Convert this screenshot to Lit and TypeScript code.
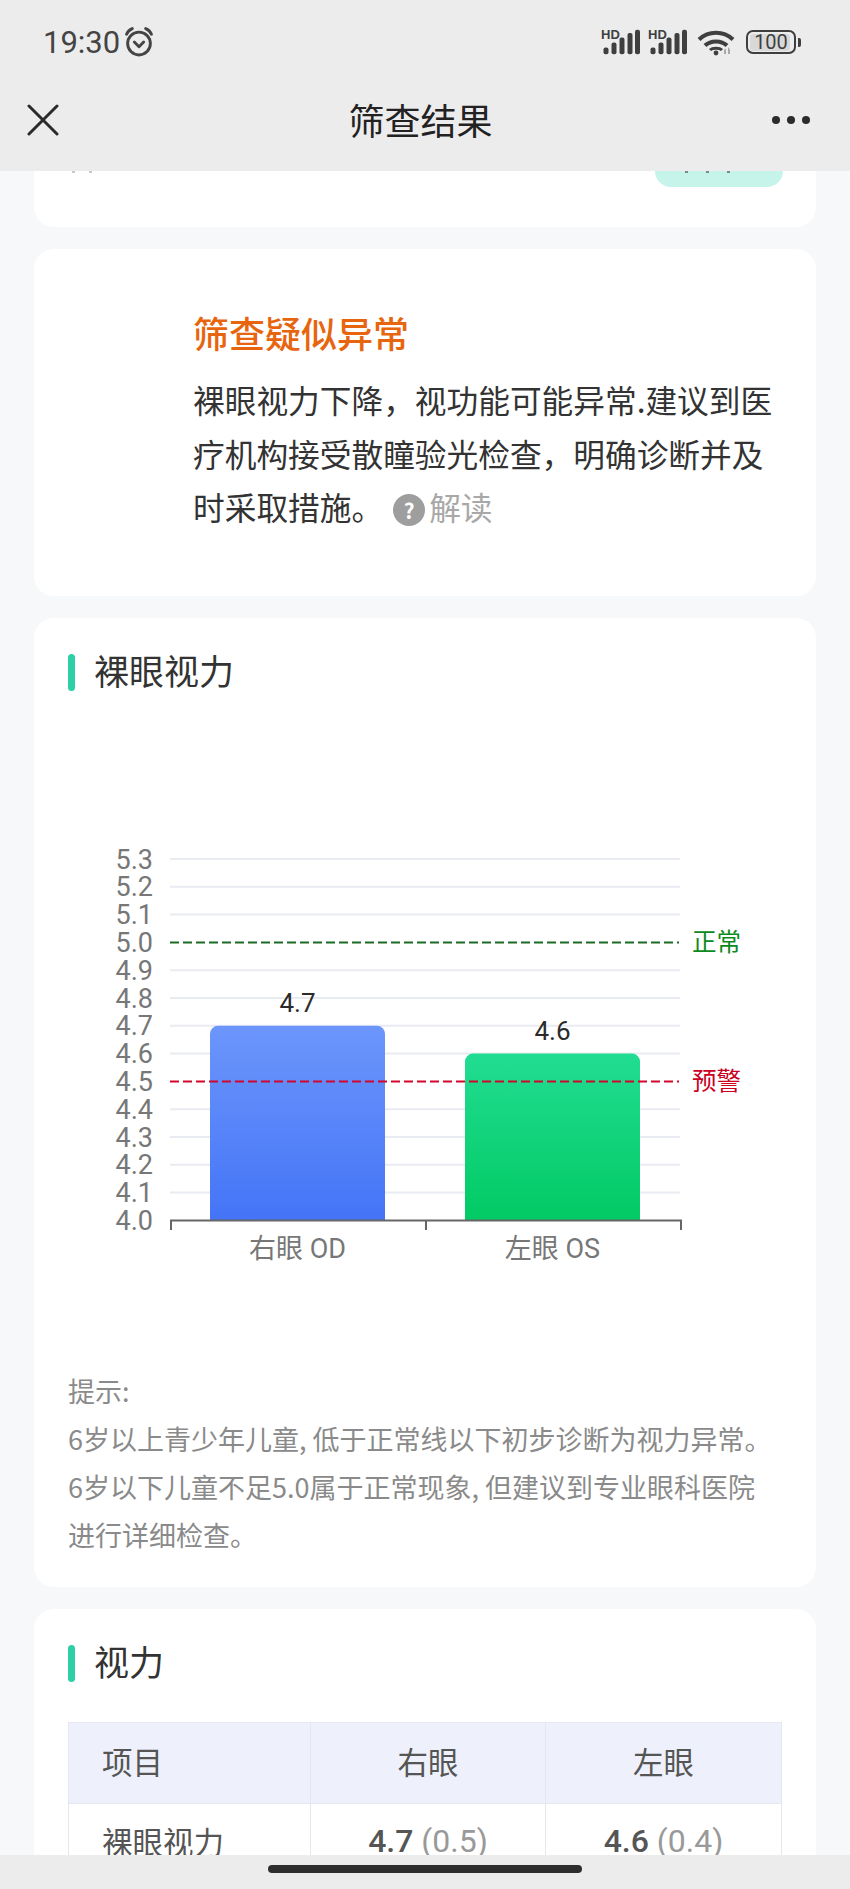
import { LitElement, css, html, svg } from 'lit'
import { customElement } from 'lit/decorators.js'

// chart geometry, in svg units (svg sits at page x=68, y=800)
const TICKS = ['5.3', '5.2', '5.1', '5.0', '4.9', '4.8', '4.7', '4.6', '4.5', '4.4', '4.3', '4.2', '4.1', '4.0']
const TOP = 59
const STEP = 27.8
const valueY = (v: number) => TOP + (5.3 - v) * 10 * STEP

const BARS = [
	{ value: 4.7, x: 142, label: '右眼 OD', fill: 'url(#blue)' },
	{ value: 4.6, x: 397, label: '左眼 OS', fill: 'url(#green)' },
]

@customElement('app-root')
export class AppRoot extends LitElement {
	renderChart() {
		const base = valueY(4.0)
		return html`
			<svg class="chart" width="748" height="480" viewBox="0 0 748 480">
				<defs>
					<linearGradient id="blue" x1="0" y1="0" x2="0" y2="1">
						<stop offset="0" stop-color="#6c96fb"></stop>
						<stop offset="1" stop-color="#4474f7"></stop>
					</linearGradient>
					<linearGradient id="green" x1="0" y1="0" x2="0" y2="1">
						<stop offset="0" stop-color="#21dd92"></stop>
						<stop offset="1" stop-color="#02ca64"></stop>
					</linearGradient>
				</defs>
				${TICKS.map((t, i) => {
					const y = TOP + i * STEP
					return svg`
						${t !== '5.0' && t !== '4.5' && t !== '4.0'
							? svg`<line x1="102" x2="612" y1=${y} y2=${y} stroke="#e9ebf3" stroke-width="2"></line>`
							: ''}
						<text class="tick" x="85" y=${y + 9.5} text-anchor="end">${t}</text>
					`
				})}
				${BARS.map(b => {
					const top = valueY(b.value)
					return svg`
						<path d="M${b.x} ${base}V${top + 8}a8 8 0 0 1 8-8h159a8 8 0 0 1 8 8V${base}Z" fill=${b.fill}></path>
						<text class="val" x=${b.x + 87.5} y=${top - 14} text-anchor="middle">${b.value.toFixed(1)}</text>
						<text class="tick cat" x=${b.x + 87.5} y=${base + 38} text-anchor="middle">${b.label}</text>
					`
				})}
				<line x1="102" x2="611" y1=${valueY(5.0)} y2=${valueY(5.0)} stroke="#1b6b25" stroke-width="2" stroke-dasharray="9 4"></line>
				<line x1="102" x2="611" y1=${valueY(4.5)} y2=${valueY(4.5)} stroke="#d2062a" stroke-width="2" stroke-dasharray="9 4"></line>
				<text class="mark" x="624" y=${valueY(5.0) + 9} fill="#0c8a1c">正常</text>
				<text class="mark" x="624" y=${valueY(4.5) + 9} fill="#c9001f">预警</text>
				<path d="M103 430V${base}H613V430M358 ${base}V430" fill="none" stroke="#666" stroke-width="2"></path>
			</svg>
		`
	}

	render() {
		return html`
			<div class="top">
				<div class="status">
					<span class="time">19:30</span>
					<svg class="alarm" width="28" height="30" viewBox="1.500 0.500 27 29" fill="none" stroke="#444" stroke-width="2.800" stroke-linecap="round" stroke-linejoin="round">
						<circle cx="15" cy="16.500" r="11"></circle>
						<path d="M10.500 15l4.500 4.500 4.500-4.500"></path>
						<path d="M3 7.500C4 5 6 3 8.500 2M27 7.500C26 5 24 3 21.500 2"></path>
					</svg>
					<div class="status-right">
						${[0, 1].map(() => html`
							<svg class="signal" width="40" height="26" viewBox="0 0 40 26">
								<text class="hd" x="0" y="10">HD</text>
								<g fill="#3f3f3f">
									<rect x="2.500" y="18.500" width="5" height="6.700" rx="2"></rect>
									<rect x="10.500" y="13.500" width="5" height="11.700" rx="2"></rect>
									<rect x="18.500" y="8.500" width="5" height="16.700" rx="2"></rect>
									<rect x="26.500" y="4" width="5" height="21.200" rx="2"></rect>
									<rect x="34" y="0.800" width="5" height="24.400" rx="2"></rect>
								</g>
							</svg>
						`)}
						<svg class="wifi" width="38" height="27" viewBox="0 0 38 27" fill="none" stroke="#3f3f3f" stroke-width="4">
							<path d="M2 10.500C11.500 1.500 26.500 1.500 36 10.500"></path>
							<path d="M8 16.500C13.500 11 24.500 11 30 16.500"></path>
							<path d="M13 21C15.500 18.500 22.500 18.500 25 21" stroke-width="3"></path>
							<circle cx="19" cy="24" r="2.400" fill="#3f3f3f" stroke="none"></circle>
							<path d="M27 25v-4l2-1.500V25zM31 25v-7l2 2.500V25z" fill="#a8a8a8" stroke="none"></path>
						</svg>
						<div class="battery"><span class="battery-fill"></span><span class="battery-text">100</span></div>
						<span class="nub"></span>
					</div>
				</div>
				<div class="nav">
					<svg width="32" height="32" viewBox="0 0 32 32" stroke="#2b2b2b" stroke-width="3" stroke-linecap="round">
						<path d="M2 2l28 28M30 2L2 30"></path>
					</svg>
					<div class="nav-title">筛查结果</div>
					<div class="dots"><i></i><i></i><i></i></div>
				</div>
			</div>

			<div class="main">
				<div class="card stub">
					<div class="specks left"><i></i><i></i></div>
					<div class="badge"><div class="specks"><i></i><i></i><i></i></div></div>
				</div>

				<div class="card notice">
					<div class="notice-title">筛查疑似异常</div>
					<div class="notice-text">
						裸眼视力下降，视功能可能异常.建议到医疗机构接受散瞳验光检查，明确诊断并及时采取措施。<span class="hint"><span class="qmark">?</span>解读</span>
					</div>
				</div>

				<div class="card section">
					<div class="sec-title">裸眼视力</div>
					${this.renderChart()}
					<div class="tips">
						提示:<br>
						6岁以上青少年儿童, 低于正常线以下初步诊断为视力异常。<br>
						6岁以下儿童不足5.0属于正常现象, 但建议到专业眼科医院<br>
						进行详细检查。
					</div>
				</div>

				<div class="card section">
					<div class="sec-title">视力</div>
					<table>
						<colgroup><col class="c1"><col class="c2"><col class="c3"></colgroup>
						<thead>
							<tr><th class="item">项目</th><th>右眼</th><th>左眼</th></tr>
						</thead>
						<tbody>
							<tr>
								<td class="item">裸眼视力</td>
								<td class="num"><b>4.7</b> <span class="sub">(0.5)</span></td>
								<td class="num"><b>4.6</b> <span class="sub">(0.4)</span></td>
							</tr>
						</tbody>
					</table>
				</div>
			</div>

			<div class="bottom"><span class="home"></span></div>
		`
	}

	static styles = css`
		:host {
			display: flex;
			flex-direction: column;
			width: 850px;
			height: 1889px;
			overflow: hidden;
			background: #f7f8fa;
			font-family: "Noto Sans CJK SC", "Noto Sans", sans-serif;
			color: #333;
		}

		.top {
			flex: none;
			height: 171px;
			background: #ececec;
			position: relative;
			z-index: 1;
		}

		.status {
			height: 84px;
			display: flex;
			align-items: center;
			padding: 0 49px 0 43px;
		}

		.time {
			font-family: Roboto, sans-serif;
			font-size: 31px;
			color: #444;
		}

		.alarm {
			margin-left: 5px;
		}

		.status-right {
			margin-left: auto;
			display: flex;
			align-items: center;
		}

		.status-right svg + svg {
			margin-left: 7px;
		}

		.status-right .wifi {
			margin-left: 9px;
		}

		.signal {
			overflow: visible;
		}

		.hd {
			font-family: "Liberation Sans", sans-serif;
			font-size: 13px;
			font-weight: 700;
			fill: #3f3f3f;
		}

		.battery {
			position: relative;
			margin-left: 11px;
			width: 50px;
			height: 24px;
			box-sizing: border-box;
			border: 2.500px solid #3f3f3f;
			border-radius: 7px;
			display: flex;
			align-items: center;
			justify-content: center;
		}

		.battery-fill {
			position: absolute;
			inset: 1.500px 4px 1.500px 1.500px;
			background: #d8d8d8;
			border-radius: 3px;
		}

		.battery-text {
			position: relative;
			font-family: Roboto, sans-serif;
			font-size: 20px;
			line-height: 1;
			color: #3f3f3f;
		}

		.nub {
			margin-left: 2px;
			width: 3px;
			height: 9px;
			border-radius: 0 2px 2px 0;
			background: #3f3f3f;
		}

		.nav {
			height: 72px;
			display: grid;
			grid-template-columns: 1fr auto 1fr;
			align-items: center;
			padding: 0 40px 0 27px;
		}

		.nav-title {
			font-size: 36px;
			color: #222;
			line-height: 1;
			margin-left: 4px;
			padding-bottom: 2px;
		}

		.dots {
			justify-self: end;
			display: flex;
			gap: 7px;
		}

		.dots i {
			width: 8px;
			height: 8px;
			border-radius: 50%;
			background: #2b2b2b;
		}

		.main {
			flex: 1;
			min-height: 0;
			overflow: hidden;
			padding: 0 34px;
			display: flex;
			flex-direction: column;
			gap: 22px;
		}

		.card {
			flex: none;
			background: #fff;
			border-radius: 20px;
		}

		.stub {
			height: 56px;
			border-radius: 0 0 20px 20px;
			display: flex;
			justify-content: space-between;
			align-items: flex-start;
			padding: 0 33px 0 38px;
		}

		.badge {
			width: 128px;
			height: 16px;
			background: #c6f3ea;
			border-radius: 0 0 16px 16px;
			padding-left: 30px;
			box-sizing: border-box;
		}

		.specks {
			display: flex;
			gap: 18px;
		}

		.specks i {
			width: 3px;
			height: 2px;
			background: #7c8a86;
		}

		.specks.left {
			gap: 14px;
		}

		.specks.left i {
			background: #c9c9c9;
		}

		.notice {
			padding: 56px 40px 62px 159px;
		}

		.notice-title {
			font-size: 36px;
			font-weight: 500;
			line-height: 54px;
			color: #e8650f;
			margin-bottom: 14px;
		}

		.notice-text {
			font-size: 31.700px;
			line-height: 53.500px;
			color: #333;
		}

		.hint {
			color: #a8a8a8;
			margin-left: 10px;
		}

		.qmark {
			display: inline-block;
			width: 32px;
			height: 32px;
			border-radius: 50%;
			background: #9e9e9e;
			color: #fff;
			font-size: 21px;
			font-weight: 700;
			line-height: 32px;
			text-align: center;
			margin-right: 4px;
			vertical-align: 1px;
		}

		.section {
			padding: 36px 34px 0;
		}

		.sec-title {
			position: relative;
			padding-left: 26px;
			padding-bottom: 5px;
			font-size: 35px;
			line-height: 32px;
			color: #333;
		}

		.sec-title::before {
			content: '';
			position: absolute;
			left: 0;
			top: 0;
			width: 7px;
			height: 37px;
			border-radius: 4px;
			background: #2ccfa6;
		}

		.chart {
			display: block;
			margin-top: 109px;
			overflow: visible;
		}

		.chart text {
			font-family: Roboto, "Noto Sans CJK SC", sans-serif;
			font-size: 27px;
		}

		.chart .tick {
			fill: #777;
		}

		.chart .val {
			fill: #2b2b2b;
			font-size: 26px;
		}

		.chart .mark {
			font-family: "Noto Sans CJK SC", sans-serif;
			font-size: 24.500px;
		}

		.tips {
			margin-top: 87px;
			padding-bottom: 28px;
			font-size: 27px;
			line-height: 48px;
			color: #8a8a8a;
			white-space: nowrap;
		}

		table {
			margin-top: 40px;
			width: 713px;
			table-layout: fixed;
			border-collapse: collapse;
			font-size: 30.500px;
			color: #555;
		}

		.c1 {
			width: 242px;
		}

		.c2 {
			width: 235px;
		}

		.c3 {
			width: 236px;
		}

		th,
		td {
			box-sizing: border-box;
			border: 1.500px solid #e4e7f0;
			text-align: center;
			font-weight: 400;
			padding: 0 0 4px;
		}

		th {
			height: 81px;
			background: #eef1fc;
		}

		td {
			height: 80px;
		}

		.item {
			text-align: left;
			padding-left: 33px;
		}

		.num {
			font-family: Roboto, sans-serif;
			font-size: 32px;
		}

		td b {
			font-weight: 500;
			color: #555;
		}

		.sub {
			color: #999;
		}

		.bottom {
			flex: none;
			height: 34px;
			background: #ececec;
			display: flex;
			align-items: flex-start;
			justify-content: center;
			position: relative;
			z-index: 1;
		}

		.home {
			margin-top: 10px;
			width: 314px;
			height: 8px;
			border-radius: 4px;
			background: #2e2e2e;
		}
	`
}
